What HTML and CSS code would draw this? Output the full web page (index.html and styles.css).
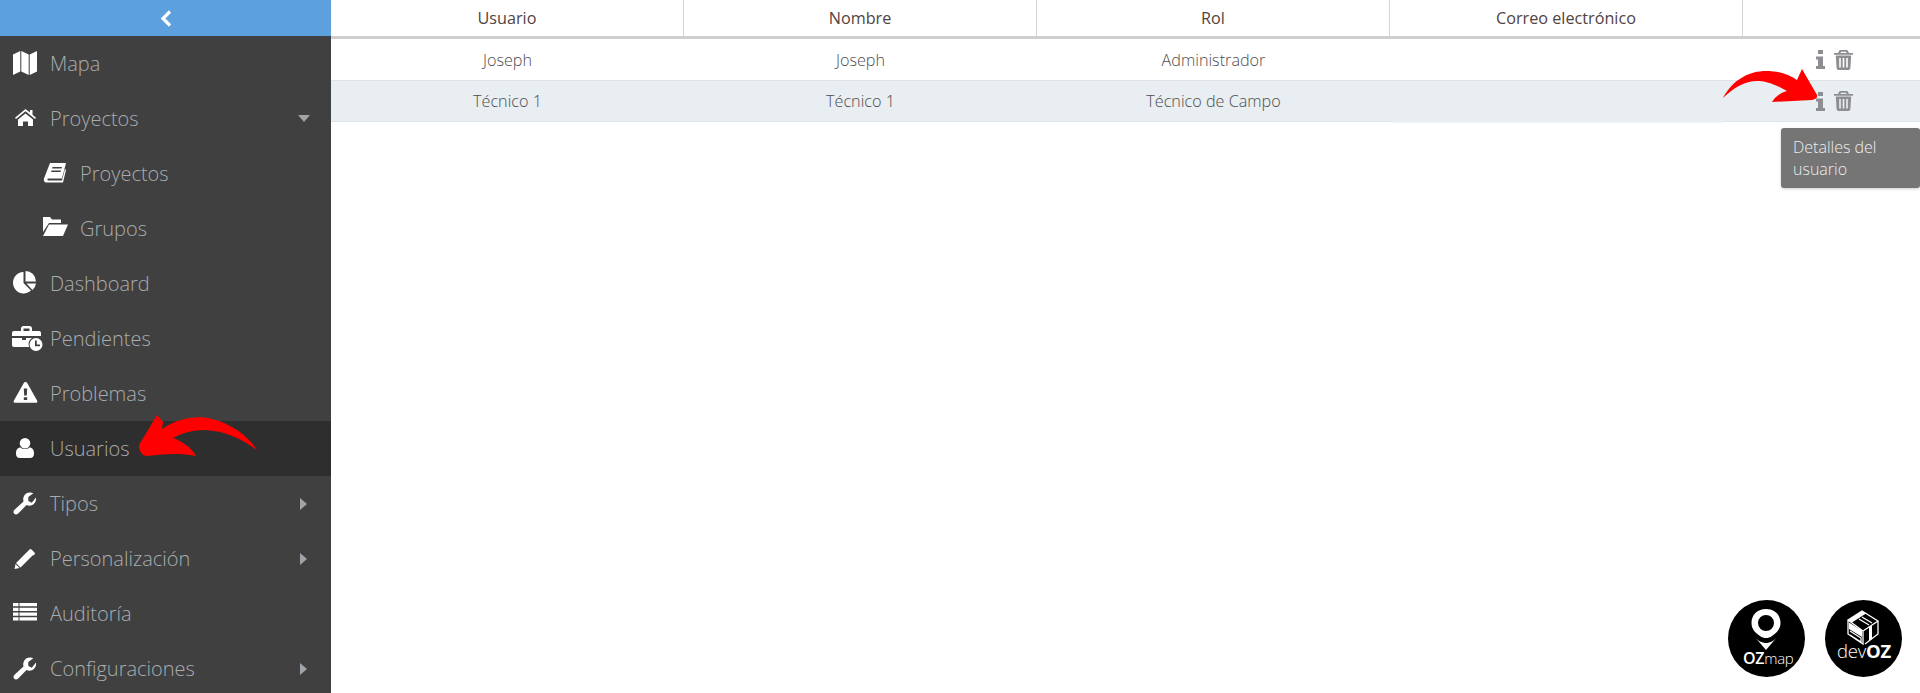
FILE: index.html
```html
<!DOCTYPE html>
<html lang="es">
<head>
<meta charset="utf-8">
<title>Usuarios</title>
<link rel="stylesheet" href="styles.css">
</head>
<body>
<div class="app">
  <aside class="sidebar">
    <div class="collapse">
      <svg class="chev" viewBox="0 0 12 17"><path d="M10 1.500 3 8.500l7 7" fill="none" stroke="#fff" stroke-width="3.200"/></svg>
    </div>
    <nav class="menu">
      <a class="item"><svg class="ico" viewBox="0 0 24 24"><path d="M0 2.500 7.300-1V19.500L0 23ZM8.300-1 15.700 2.500V23L8.300 19.500ZM16.700 2.500 24-1V19.500L16.700 23Z"/></svg><span>Mapa</span></a>
      <a class="item"><svg class="ico" viewBox="0 0 24 24"><path d="M12.500 2 2 10.800l1 1.200 9.500-7.800L22 12l1-1.200-3.500-3V3H17v2.400zM5 12.500V19h5v-4.500h5V19h5v-6.500l-7.500-6z"/></svg><span>Proyectos</span><i class="caret-down"></i></a>
      <a class="item sub"><svg class="ico" viewBox="0 0 24 24"><path fill-rule="evenodd" d="M7 1h16l-4 15.500H5.500c-1.500 0-1.500 2 0 2H19l3-11.500 1 1-3 12.500H4C1 20.500.6 18.500 1 16.500zM9.500 5l-.4 1.500h9.500l.4-1.500zM8.500 8.500l-.4 1.500h9.500l.4-1.500z"/></svg><span>Proyectos</span></a>
      <a class="item sub"><svg class="ico" viewBox="0 0 24 24"><path d="M0 0h7l2 2.500h9V6H6L0 15zM6 7.500H25L20 19H0z"/></svg><span>Grupos</span></a>
      <a class="item"><svg class="ico" viewBox="0 0 24 24"><path d="M10.500 0V11l7.500 7.500A10.700 10.700 0 1 1 10.500 0zM12.500-1A10.500 10.500 0 0 1 23 9.500H12.500zM13.500 11.500H23a10.500 10.500 0 0 1-3.500 6.500z"/></svg><span>Dashboard</span></a>
      <a class="item"><svg class="ico wide" viewBox="0 0 30 24"><g transform="translate(0 -2)"><path fill-rule="evenodd" d="M9 3.500C9 2 10 1 11.500 1h6C19 1 20 2 20 3.500V6h7c1.200 0 2 .8 2 2v3H0V8c0-1.200.8-2 2-2h7zM11.500 3.500V6h6V3.500zM0 13h10v2h4v-2h6a8 8 0 0 0-3 9H2c-1.200 0-2-.8-2-2z"/><path fill-rule="evenodd" d="M24 13a6.500 6.500 0 1 0 0 13 6.500 6.500 0 0 0 0-13zm-1 2.500h1.800v4H28v1.800h-5z"/></g></svg><span>Pendientes</span></a>
      <a class="item"><svg class="ico" viewBox="0 0 24 24"><path fill-rule="evenodd" transform="translate(.5 -1) scale(1 .93)" d="M12 1c.8 0 1.300.5 1.700 1.200l10 19c.6 1.200-.2 2.300-1.500 2.300H1.800C.5 23.500-.3 22.400.3 21.200l10-19C10.700 1.500 11.200 1 12 1zM10.300 8l.4 7.500h2.600l.4-7.500zM10.300 17.500v3h3.400v-3z"/></svg><span>Problemas</span></a>
      <a class="item active"><svg class="ico" viewBox="0 0 24 24"><path d="M12 1a5.300 5.300 0 0 1 0 10.600A5.300 5.300 0 0 1 12 1zM7.500 10.500c1.200 1 2.800 1.500 4.500 1.500s3.300-.5 4.500-1.500c3 0 4.500 2.500 4.500 6 0 3-1.500 4.500-4 4.500H7c-2.500 0-4-1.500-4-4.500 0-3.500 1.500-6 4.500-6z"/></svg><span>Usuarios</span></a>
      <a class="item"><svg class="ico" viewBox="0 0 24 24"><path d="M23 5.500c.6 3-1 6.500-4.200 7.800-1.800.7-3.700.5-5.300-.2L5.200 21.500c-1.300 1.300-3 1.300-4 .2s-1-2.800.3-4l9-8.300c-.8-2.600 0-6 2.600-7.900C15 .5 18 .2 20.300 1.200l-5 3.700v4l3.500 1.800z"/></svg><span>Tipos</span><i class="caret-right"></i></a>
      <a class="item"><svg class="ico" viewBox="0 0 24 24"><path d="M15.500 3.500 20 8 7.500 20.500 3 16zM16.500 2.500a1.500 1.500 0 0 1 2 0L21.500 5.500a1.500 1.500 0 0 1 0 2l-1 1-5-5zM2.500 17 6.500 21 1.500 22z"/></svg><span>Personalización</span><i class="caret-right"></i></a>
      <a class="item"><svg class="ico" viewBox="0 0 24 24"><path transform="translate(0 -1.500)" d="M0 2.500h5.500v3.300H0zM6.500 2.500H24v3.300H6.500zM0 7.200h5.500v3.300H0zM6.500 7.200H24v3.300H6.500zM0 12h5.500v3.300H0zM6.500 12H24v3.300H6.500zM0 16.700h5.500V20H0zM6.500 16.700H24V20H6.500z"/></svg><span>Auditoría</span></a>
      <a class="item"><svg class="ico" viewBox="0 0 24 24"><path d="M23 5.500c.6 3-1 6.500-4.200 7.800-1.800.7-3.700.5-5.300-.2L5.200 21.500c-1.300 1.300-3 1.300-4 .2s-1-2.800.3-4l9-8.300c-.8-2.600 0-6 2.600-7.900C15 .5 18 .2 20.300 1.200l-5 3.700v4l3.500 1.800z"/></svg><span>Configuraciones</span><i class="caret-right"></i></a>
    </nav>
  </aside>
  <main class="content">
    <div class="thead">
      <div class="th">Usuario</div>
      <div class="th">Nombre</div>
      <div class="th">Rol</div>
      <div class="th">Correo electrónico</div>
      <div class="th"></div>
    </div>
    <div class="tr">
      <div class="td">Joseph</div>
      <div class="td">Joseph</div>
      <div class="td">Administrador</div>
      <div class="td"></div>
      <div class="td actions">
        <svg class="act info" viewBox="0 0 9 19"><path d="M2 0h5v4H2zM0 6.500h7V16h2v3H0v-3h2v-6.500H0z"/></svg>
        <svg class="act trash" viewBox="0 0 19 20"><path fill-rule="evenodd" d="M6.500 0h6c.8 0 1.300.5 1.600 1.200L15 3h4v1.800H0V3h4l.9-1.800C5.200.5 5.700 0 6.500 0zM7 1.700 6.400 3h6.200L12 1.700zM1.800 5.500h15.400l-.8 12.500c-.1 1.200-.9 2-2 2H4.600c-1.100 0-1.900-.8-2-2zM5.200 8v9.500h1.600V8zM8.700 8v9.500h1.600V8zM12.200 8v9.500h1.600V8z"/></svg>
      </div>
    </div>
    <div class="tr alt">
      <div class="td">Técnico 1</div>
      <div class="td">Técnico 1</div>
      <div class="td">Técnico de Campo</div>
      <div class="td"></div>
      <div class="td actions">
        <svg class="act info" viewBox="0 0 9 19"><path d="M2 0h5v4H2zM0 6.500h7V16h2v3H0v-3h2v-6.500H0z"/></svg>
        <svg class="act trash" viewBox="0 0 19 20"><path fill-rule="evenodd" d="M6.500 0h6c.8 0 1.300.5 1.600 1.200L15 3h4v1.800H0V3h4l.9-1.800C5.200.5 5.700 0 6.500 0zM7 1.700 6.400 3h6.200L12 1.700zM1.800 5.500h15.400l-.8 12.500c-.1 1.200-.9 2-2 2H4.600c-1.100 0-1.900-.8-2-2zM5.200 8v9.500h1.600V8zM8.700 8v9.500h1.600V8zM12.200 8v9.500h1.600V8z"/></svg>
      </div>
    </div>
  </main>
</div>
<div class="patch"></div>
<div class="tooltip">Detalles del usuario</div>
<svg class="annot" viewBox="0 0 1920 693">
  <path fill="#f00" d="M139 445 157 415 163 422 162 429C178 418 198 415 212 419 232 424 248 436 257 450 240 438 225 431 205 430 192 430 182 433 173 438 182 441 192 448 196 456 180 453 165 454 147 456 142 456 139 451 139 445Z"/>
  <path fill="#f00" d="M1723 98C1733 79 1750 71 1766 71 1778 71 1788 74 1797 80L1802 69 1817 95Q1818 99 1812 100L1772 102C1775 97 1780 93 1787 91 1775 84 1765 81 1757 81 1745 81 1733 88 1723 98Z"/>
</svg>
<div class="badges">
  <svg class="badge" viewBox="0 0 77 77">
    <circle cx="38.500" cy="38.500" r="38.500" fill="#000"/>
    <path fill="#fff" fill-rule="evenodd" d="M38 9C28.500 9 23.500 15.500 23.500 23c0 6 4 10 8.500 13 2 1.500 4 2 6 2s4-.5 6-2c4.500-3 8.500-7 8.500-13C52.500 15.500 47.500 9 38 9zm0 6a8 8 0 1 1 0 16 8 8 0 0 1 0-16z"/>
    <path fill="#fff" d="M26 36C30 41 34 43 38 43S46 41 50 36L38 50z"/>
    <text class="logo-a" x="15" y="64"><tspan class="logo-b">OZ</tspan>map</text>
  </svg>
  <svg class="badge" viewBox="0 0 77 77">
    <circle cx="38.500" cy="38.500" r="38.500" fill="#000"/>
    <path fill="#fff" d="M23 20 37 11 41 13.500 27 22.500ZM24 22.500 37 30.500V37L24 29ZM44 27 47 25V39L44 41Z"/>
    <path fill="none" stroke="#fff" stroke-width="1.300" d="M23 20 37 11 53 21 38 31ZM23 20V34L38 44V31M53 21V34L40 44M25 31 36 38V42L25 35M37 17 47 23M34 19 44 25"/>
    <text class="logo-c" x="12" y="58">dev<tspan class="logo-b">OZ</tspan></text>
  </svg>
</div>
</body>
</html>
```
FILE: styles.css
```css
* { box-sizing: border-box; }
html, body { margin: 0; height: 100%; overflow: hidden; background: #fff; }
body { font-family: "Open Sans", "Liberation Sans", sans-serif; position: relative; }
.app { display: flex; height: 693px; }
.sidebar { width: 331px; flex: none; background: #404040; display: flex; flex-direction: column; overflow: hidden; }
.collapse { height: 36px; flex: none; background: #5ca0de; display: flex; align-items: center; justify-content: center; }
.chev { width: 12px; height: 17px; }
.menu { display: flex; flex-direction: column; }
.item { height: 55px; flex: none; display: flex; align-items: center; padding-left: 13px; padding-right: 24px; color: #a8acb0; font-size: 20px; font-weight: 300; }
.item span { margin-left: 13px; }
.item.sub { padding-left: 43px; }
.item.active { background: #2e2e2e; }
.ico { width: 24px; height: 24px; fill: #fff; flex: none; overflow: visible; }
.ico.wide { width: 30px; margin-right: -5px; margin-left: -1px; }
.caret-down { margin-left: auto; margin-right: -3px; border-left: 6px solid transparent; border-right: 6px solid transparent; border-top: 7px solid #a0a4a8; }
.caret-right { margin-left: auto; border-top: 6px solid transparent; border-bottom: 6px solid transparent; border-left: 7px solid #a0a4a8; }
.content { flex: 1; min-width: 0; }
.thead, .tr { display: grid; grid-template-columns: 353px 353px 353px 353px 177px; }
.thead { height: 39px; border-bottom: 3px solid #cfcfcf; }
.th { display: flex; align-items: center; justify-content: center; font-size: 16.2px; color: #51433f; border-right: 1px solid #d5d5d5; }
.th:last-child { border-right: 0; }
.tr { height: 42px; border-bottom: 1px solid #dfe3e6; }
.tr.alt { height: 41px; background: #e9eef2; }
.td { display: flex; align-items: center; justify-content: center; font-size: 16.2px; font-weight: 300; color: #4d4d4d; }
.actions { gap: 9px; justify-content: flex-start; padding-left: 73px; }
.act { fill: #8e8e92; flex: none; }
.act.info { width: 9px; height: 19px; }
.act.trash { width: 19px; height: 20px; }
.patch { position: absolute; left: 1392px; top: 121px; width: 331px; height: 2px; background: #edf1f4; }
.tooltip { position: absolute; left: 1781px; top: 128px; width: 139px; height: 60px; padding: 8px 12px; background: #757575; border-radius: 3px; color: #eee; font-size: 16px; line-height: 22px; font-weight: 300; box-shadow: 0 1px 3px rgba(0,0,0,.2); }
.annot { position: absolute; left: 0; top: 0; width: 1920px; height: 693px; pointer-events: none; }
.badges { position: absolute; left: 1728px; top: 600px; display: flex; gap: 20px; }
.badge { width: 77px; height: 77px; display: block; }
.logo-a { font-size: 15px; fill: #fff; font-weight: 300; letter-spacing: -.3px; }
.logo-a .logo-b { font-size: 16px; font-weight: 600; }
.logo-c { font-size: 18.500px; fill: #fff; font-weight: 300; letter-spacing: -.2px; }
.logo-c .logo-b { font-weight: 700; }
```
